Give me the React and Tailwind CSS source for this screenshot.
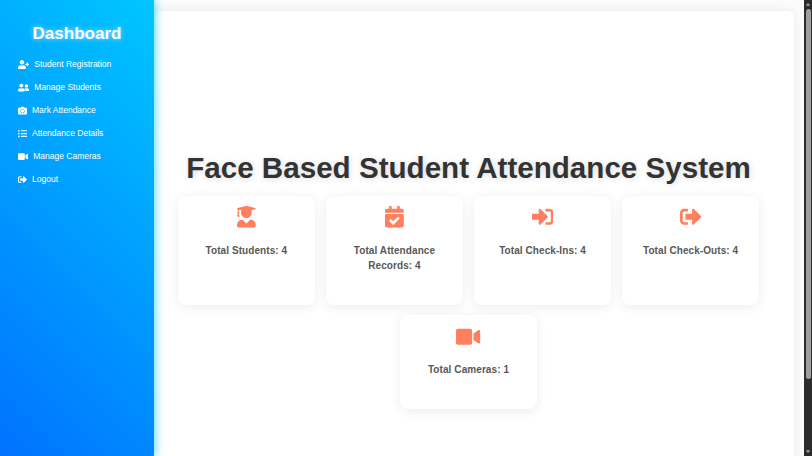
import {
  FaUserPlus,
  FaUserFriends,
  FaCamera,
  FaListUl,
  FaVideo,
  FaCalendarCheck,
  FaUserGraduate,
} from "react-icons/fa";

function SignInIcon({ className }) {
  return (
    <svg viewBox="0 0 512 512" fill="currentColor" className={className}>
      <path d="M416 448h-84c-6.6 0-12-5.4-12-12v-40c0-6.6 5.4-12 12-12h84c17.7 0 32-14.3 32-32V160c0-17.7-14.3-32-32-32h-84c-6.6 0-12-5.4-12-12V76c0-6.6 5.4-12 12-12h84c53 0 96 43 96 96v192c0 53-43 96-96 96zm-47-209L201 71c-15-15-41-4.5-41 17v96H24c-13.3 0-24 10.7-24 24v96c0 13.3 10.7 24 24 24h136v96c0 21.5 26 32 41 17l168-168c9.3-9.4 9.3-24.6 0-34z" />
    </svg>
  );
}

function SignOutIcon({ className }) {
  return (
    <svg viewBox="0 0 512 512" fill="currentColor" className={className}>
      <path d="M497 273L329 441c-15 15-41 4.5-41-17v-96H152c-13.3 0-24-10.7-24-24v-96c0-13.3 10.7-24 24-24h136V88c0-21.4 25.9-32 41-17l168 168c9.3 9.4 9.3 24.6 0 34zM192 436v-40c0-6.6-5.4-12-12-12H96c-17.7 0-32-14.3-32-32V160c0-17.7 14.3-32 32-32h84c6.6 0 12-5.4 12-12V76c0-6.6-5.4-12-12-12H96c-53 0-96 43-96 96v192c0 53 43 96 96 96h84c6.6 0 12-5.4 12-12z" />
    </svg>
  );
}

const links = [
  { label: "Student Registration", Icon: FaUserPlus, box: "w-[11.3px]" },
  { label: "Manage Students", Icon: FaUserFriends, box: "w-[11.3px]" },
  { label: "Mark Attendance", Icon: FaCamera, box: "w-[9px]" },
  { label: "Attendance Details", Icon: FaListUl, box: "w-[9px]" },
  { label: "Manage Cameras", Icon: FaVideo, box: "w-[10.2px]" },
  { label: "Logout", Icon: SignOutIcon, box: "w-[9px]" },
];

const stats = [
  { label: "Total Students: 4", Icon: FaUserGraduate, box: "w-[18.8px]" },
  { label: "Total Attendance Records: 4", Icon: FaCalendarCheck, box: "w-[18.8px]" },
  { label: "Total Check-Ins: 4", Icon: SignInIcon, box: "w-[21.5px]" },
  { label: "Total Check-Outs: 4", Icon: SignOutIcon, box: "w-[21.5px]" },
];

function Card({ label, Icon, box, height }) {
  return (
    <div
      className={`flex w-[137.4px] flex-col items-center rounded-[8px] bg-white px-5 pt-[10.5px] shadow-[0_2px_11px_rgba(0,0,0,0.08)] ${height}`}
    >
      <Icon className={`h-[21.5px] shrink-0 text-[#ff7f5f] ${box}`} />
      <p className="mt-[15px] text-center text-[10px] leading-[15px] font-bold tracking-[0.08px] text-[#585858]">
        {label}
      </p>
    </div>
  );
}

export default function App() {
  return (
    <div className="flex h-[456px] w-[812px] overflow-hidden bg-[#fcfcfc] font-['Liberation_Sans',Arial,sans-serif]">
      <aside className="z-10 h-full w-[154px] shrink-0 bg-[linear-gradient(45deg,#0072ff,#00c6ff)] pt-[22px] shadow-[2px_0_8px_rgba(0,198,255,0.6)]">
        <h2 className="text-center text-[17px] leading-6 font-bold text-white [text-shadow:0_0_5px_rgba(255,255,255,0.6)]">
          Dashboard
        </h2>
        <nav className="mt-[7px] flex flex-col pl-[18px]">
          {links.map(({ label, Icon, box }) => (
            <a key={label} className="flex h-[22.95px] items-center gap-[5px] text-[8.5px] text-white">
              <Icon className={`h-[9.2px] shrink-0 ${box}`} />
              <span>{label}</span>
            </a>
          ))}
        </nav>
      </aside>

      <div className="flex min-w-0 flex-1 pt-[10.5px] pr-[10.5px]">
        <main className="flex h-[480px] flex-1 flex-col items-center rounded-[6px] bg-white pt-[138.5px] pr-[10.5px] shadow-[0_0_11px_rgba(0,0,0,0.08)]">
          <h1 className="text-[29.6px] leading-[38px] font-bold whitespace-nowrap text-[#333] [text-shadow:1px_1px_6px_rgba(0,0,0,0.15)]">
            Face Based Student Attendance System
          </h1>
          <section className="mt-[8.5px] flex w-[600px] flex-wrap justify-center gap-x-[10.7px] gap-y-[10.5px]">
            {stats.map((s) => (
              <Card key={s.label} {...s} height="h-[109px]" />
            ))}
            <Card label="Total Cameras: 1" Icon={FaVideo} box="w-[24.2px]" height="h-[94px]" />
          </section>
        </main>
      </div>

      <div className="flex h-full w-[8px] shrink-0 flex-col items-center bg-[#2c2c2c]">
        <svg viewBox="0 0 8 10" className="h-[9px] w-full shrink-0">
          <path d="M4 3 L6.5 6.5 H1.5 Z" fill="#9f9f9f" />
        </svg>
        <div className="h-[370px] w-[5px] rounded-full bg-[#9f9f9f]" />
        <svg viewBox="0 0 8 10" className="mt-auto h-[9px] w-full shrink-0">
          <path d="M4 7 L6.5 3.5 H1.5 Z" fill="#9f9f9f" />
        </svg>
      </div>
    </div>
  );
}
